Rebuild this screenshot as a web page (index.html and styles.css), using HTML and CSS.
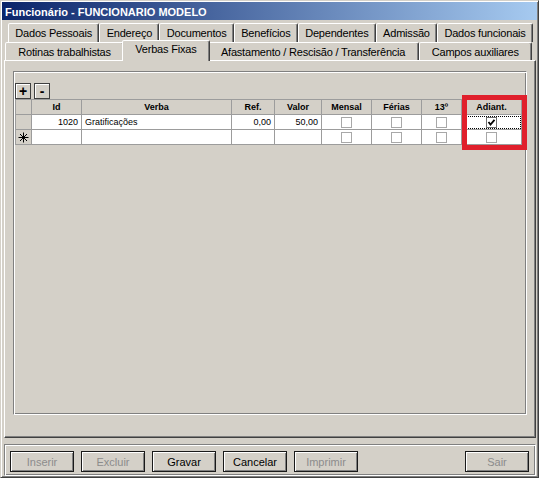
FILE: index.html
```html
<!DOCTYPE html>
<html lang="pt">
<head>
<meta charset="utf-8">
<title>Funcionário</title>
<link rel="stylesheet" href="styles.css">
</head>
<body>
<div class="window">
  <div class="titlebar">Funcionário - FUNCIONARIO MODELO</div>
  <div class="client">
    <div class="tabstrip">
      <div class="tabrow back">
        <div class="tab">Dados Pessoais</div>
        <div class="tab">Endereço</div>
        <div class="tab">Documentos</div>
        <div class="tab">Benefícios</div>
        <div class="tab">Dependentes</div>
        <div class="tab">Admissão</div>
        <div class="tab">Dados funcionais</div>
      </div>
      <div class="tabrow front">
        <div class="tab">Rotinas trabalhistas</div>
        <div class="tab selected">Verbas Fixas</div>
        <div class="tab">Afastamento / Rescisão / Transferência</div>
        <div class="tab">Campos auxiliares</div>
      </div>
    </div>
    <div class="panel">
      <div class="gridbox">
        <div class="toolbar">
          <button class="tool">+</button>
          <button class="tool">-</button>
        </div>
        <table class="grid">
          <colgroup>
            <col class="c-ind"><col class="c-id"><col class="c-verba"><col class="c-ref"><col class="c-valor"><col class="c-mensal"><col class="c-ferias"><col class="c-13"><col class="c-adiant">
          </colgroup>
          <thead>
            <tr>
              <th class="ind"></th>
              <th>Id</th>
              <th>Verba</th>
              <th>Ref.</th>
              <th>Valor</th>
              <th>Mensal</th>
              <th>Férias</th>
              <th>13º</th>
              <th>Adiant.</th>
            </tr>
          </thead>
          <tbody>
            <tr>
              <td class="ind"></td>
              <td class="num">1020</td>
              <td>Gratificações</td>
              <td class="num">0,00</td>
              <td class="num">50,00</td>
              <td class="chk"><span class="box"></span></td>
              <td class="chk"><span class="box"></span></td>
              <td class="chk"><span class="box"></span></td>
              <td class="chk focus"><span class="box checked"><svg width="9" height="9" viewBox="0 0 9 9"><path d="M1.5 4 L3.5 6.5 L7.5 1.8" fill="none" stroke="#000" stroke-width="1.8"/></svg></span></td>
            </tr>
            <tr>
              <td class="ind"><svg class="star" width="11" height="11" viewBox="0 0 11 11"><path d="M5.5 0.5 V10.5 M0.5 5.5 H10.5 M2 2 L9 9 M9 2 L2 9" stroke="#000" stroke-width="1" fill="none"/></svg></td>
              <td></td>
              <td></td>
              <td></td>
              <td></td>
              <td class="chk"><span class="box"></span></td>
              <td class="chk"><span class="box"></span></td>
              <td class="chk"><span class="box"></span></td>
              <td class="chk"><span class="box"></span></td>
            </tr>
          </tbody>
        </table>
        <div class="highlight"></div>
      </div>
    </div>
    <div class="footer">
      <button class="btn disabled">Inserir</button>
      <button class="btn disabled">Excluir</button>
      <button class="btn">Gravar</button>
      <button class="btn">Cancelar</button>
      <button class="btn disabled">Imprimir</button>
      <button class="btn disabled sair">Sair</button>
    </div>
  </div>
</div>
</body>
</html>
```
FILE: styles.css
```css
* { box-sizing: border-box; }

body {
  margin: 0;
  background: #d4d0c8;
  font-family: "Liberation Sans", Arial, sans-serif;
  color: #000;
}

.window {
  width: 539px;
  height: 478px;
  background: #d4d0c8;
  border: 1px solid;
  border-color: #d4d0c8 #404040 #404040 #d4d0c8;
  padding: 1px;
  box-shadow: inset 1px 1px #fff, inset -1px -1px #808080;
  display: flex;
  flex-direction: column;
}

.titlebar {
  flex: none;
  height: 18px;
  background: linear-gradient(to right, #0a246a, #a6caf0);
  color: #fff;
  font-weight: bold;
  font-size: 11px;
  line-height: 20px;
  padding-left: 3px;
  overflow: hidden;
  white-space: nowrap;
}

.client {
  flex: 1;
  display: flex;
  flex-direction: column;
  padding: 3px 1px 0 2px;
}

.tabstrip { flex: none; }

.tabrow {
  display: flex;
}

.tabrow.back {
  height: 19px;
  margin: 0 3px 0 4px;
}

.tabrow.front {
  height: 18px;
  margin: 0 4px 0 1px;
}

.tab {
  flex: 1 1 auto;
  padding: 1px 5px 0;
  text-align: center;
  font-size: 11px;
  line-height: 16px;
  letter-spacing: -0.2px;
  white-space: nowrap;
  background: #d4d0c8;
  border: 1px solid;
  border-bottom: none;
  border-color: #fff #404040 transparent #fff;
  box-shadow: inset -1px 0 #808080;
  border-radius: 2px 2px 0 0;
}

.tab.selected {
  position: relative;
  z-index: 1;
  margin: -2px -2px 0;
  height: 21px;
  padding-top: 0;
}

.panel {
  flex: 1;
  display: flex;
  border: 1px solid;
  border-color: #fff #404040 #404040 #fff;
  box-shadow: inset -1px -1px #808080;
  padding: 10px 8px 22px 8px;
}

.gridbox {
  flex: 1;
  position: relative;
  border: 1px solid;
  border-color: #808080 #fff #fff #808080;
  box-shadow: inset 1px 1px #fff, inset -1px -1px #808080;
  padding: 11px 1px 0 1px;
}

.toolbar {
  display: flex;
  gap: 3px;
  height: 16px;
}

.tool {
  width: 16px;
  height: 16px;
  padding: 0;
  border: 1px solid #404040;
  background: #d4d0c8;
  box-shadow: inset 1px 1px #fff;
  font-family: "Liberation Sans", Arial, sans-serif;
  font-weight: bold;
  font-size: 14px;
  line-height: 12px;
  color: #000;
}

.grid {
  border-collapse: collapse;
  table-layout: fixed;
  width: 506px;
  font-size: 9px;
}

.c-ind { width: 16px; }
.c-id { width: 50px; }
.c-verba { width: 150px; }
.c-ref { width: 43px; }
.c-valor { width: 47px; }
.c-mensal { width: 50px; }
.c-ferias { width: 50px; }
.c-13 { width: 40px; }
.c-adiant { width: 60px; }

.grid tr { height: 15px; }

.grid th,
.grid td {
  border: 1px solid #9c9c9c;
  padding: 0 3px;
  height: 15px;
  white-space: nowrap;
  overflow: hidden;
}

.grid th {
  background: #d4d0c8;
  font-weight: bold;
  text-align: center;
  color: #000;
}

.grid td {
  background: #fff;
  text-align: left;
}

.grid .ind {
  background: #d4d0c8;
  padding: 0;
  text-align: center;
}

.grid td.num { text-align: right; }

.grid td.chk {
  text-align: center;
  padding: 0;
}

.grid td.focus {
  outline: 1px dotted #000;
  outline-offset: -2px;
}

.star { display: block; margin: 0 auto; }

.box {
  display: inline-block;
  width: 11px;
  height: 11px;
  border: 1px solid #a8a8a8;
  background: #fff;
  vertical-align: middle;
}

.box.checked {
  border-color: #707070;
}

.box svg { display: block; }

.highlight {
  position: absolute;
  left: 448px;
  top: 23px;
  width: 65px;
  height: 55px;
  border: 5px solid #e0202c;
}

.footer {
  flex: none;
  height: 32px;
  margin-top: 6px;
  display: flex;
  gap: 7px;
  padding: 6px 6px 0 5px;
  border: 1px solid;
  border-color: #808080 #fff #fff #808080;
  box-shadow: inset 1px 1px #fff, inset -1px -1px #808080;
}

.btn {
  width: 64px;
  height: 21px;
  padding: 0;
  border: 1px solid #1a1a1a;
  background: #d4d0c8;
  box-shadow: inset 1px 1px #fff, inset -1px -1px #808080;
  font-family: "Liberation Sans", Arial, sans-serif;
  font-size: 11px;
  color: #000;
}

.btn.disabled {
  color: #8c8c8c;
}

.btn.sair { margin-left: auto; }
```
